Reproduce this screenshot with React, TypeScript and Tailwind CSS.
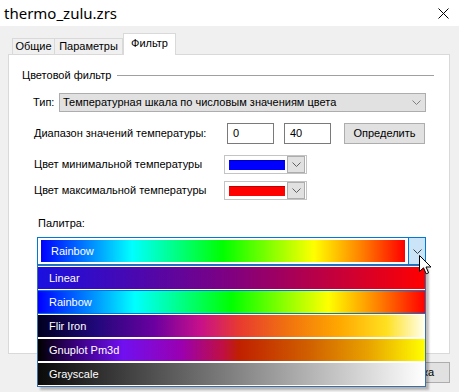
import React from 'react';

const palettes = [
  {
    name: 'Linear',
    bg: 'bg-[linear-gradient(to_right,#1a10e0_0%,#4a08b0_25%,#800080_50%,#c00040_75%,#ff0000_100%)]',
  },
  {
    name: 'Rainbow',
    bg: 'bg-[linear-gradient(to_right,#0000ff_0%,#00ffff_25%,#00ff00_50%,#ffff00_75%,#ff8000_88%,#ff0000_100%)]',
  },
  {
    name: 'Flir Iron',
    bg: 'bg-[linear-gradient(to_right,#000020_0%,#20087a_15%,#6a00a0_30%,#c8108a_42%,#e83a30_52%,#f07010_64%,#ffa800_78%,#ffe020_90%,#fffff0_100%)]',
  },
  {
    name: 'Gnuplot Pm3d',
    bg: 'bg-[linear-gradient(to_right,#000000_0%,#3a0080_10%,#7010f0_22%,#9a00b0_37%,#c01040_48%,#c02000_52%,#d06000_70%,#e8a000_85%,#ffff00_100%)]',
  },
  {
    name: 'Grayscale',
    bg: 'bg-[linear-gradient(to_right,#0a0a0a_0%,#808080_50%,#ffffff_100%)]',
  },
];

function Chevron({ color = '#606060' }: { color?: string }) {
  return (
    <svg width="9" height="5" viewBox="0 0 9 5" fill="none">
      <path d="M0.5 0.5 L4.5 4.5 L8.5 0.5" stroke={color} strokeWidth="1" />
    </svg>
  );
}

function ColorPicker({ color }: { color: string }) {
  return (
    <div className="ml-auto mr-[142px] flex h-[19px] w-[83px] shrink-0 items-center border border-[#c4c4c4] bg-white pl-[4px] pr-[1px]">
      <div className={`h-[10px] w-[56px] ${color}`} />
      <div className="ml-auto flex h-[17px] w-[18px] items-center justify-center border border-[#adadad] bg-[#e1e1e1]">
        <Chevron />
      </div>
    </div>
  );
}

export default function App() {
  return (
    <div className="relative h-[392px] w-[459px] overflow-hidden whitespace-nowrap bg-[#f0f0f0] font-['Liberation_Sans',Arial,sans-serif] text-[11px] text-black">
      {/* title bar */}
      <div className="flex h-[26px] items-center justify-between bg-white pl-[4px] pr-[10px]">
        <span className="font-['Noto_Sans',sans-serif] text-[15px] leading-none">thermo_zulu.zrs</span>
        <svg width="11" height="11" viewBox="0 0 11 11">
          <path d="M0.5 0.5 L10.5 10.5 M10.5 0.5 L0.5 10.5" stroke="#000" strokeWidth="1" />
        </svg>
      </div>

      {/* tabs */}
      <div className="pl-[8px] pr-[9px] pt-[7px]">
        <div className="relative z-10 flex h-[21px] items-end pl-[4px]">
          <div className="flex h-[16px] w-[43px] items-center justify-center border border-b-0 border-[#d9d9d9] bg-[#f0f0f0] leading-none">
            Общие
          </div>
          <div className="flex h-[16px] w-[68px] items-center justify-center border border-b-0 border-l-0 border-[#d9d9d9] bg-[#f0f0f0] leading-none">
            Параметры
          </div>
          <div className="mb-[-1px] flex h-[22px] w-[53px] items-center justify-center border border-b-0 border-[#d9d9d9] bg-white pb-[2px] leading-none">
            Фильтр
          </div>
        </div>

        {/* panel */}
        <div className="h-[300px] border border-[#d9d9d9] bg-white">
          <div className="mt-[12px] flex h-[16px] items-center pl-[13px] pr-[15px]">
            <span className="leading-none">Цветовой фильтр</span>
            <div className="ml-[6px] h-px flex-1 bg-[#a0a0a0]" />
          </div>

          <div className="mt-[10px] flex h-[19px] items-center pl-[24px]">
            <span className="w-[26px] leading-none">Тип:</span>
            <div className="ml-auto mr-[23px] flex h-[19px] w-[367px] shrink-0 items-center border border-[#adadad] bg-[#e1e1e1] pl-[3px] pr-[4px]">
              <span className="leading-none">Температурная шкала по числовым значениям цвета</span>
              <div className="ml-auto">
                <Chevron color="#808080" />
              </div>
            </div>
          </div>

          <div className="mt-[11px] flex h-[21px] items-center pl-[25px]">
            <span className="leading-none">Диапазон значений температуры:</span>
            <div className="ml-auto mr-[24px] flex shrink-0 items-center">
              <div className="flex h-[21px] w-[47px] items-center border border-[#7a7a7a] bg-white pl-[5px] leading-none">0</div>
              <div className="ml-[10px] flex h-[21px] w-[47px] items-center border border-[#7a7a7a] bg-white pl-[5px] leading-none">40</div>
              <div className="ml-[13px] flex h-[21px] w-[81px] items-center justify-center border border-[#adadad] bg-[#e1e1e1] leading-none">
                Определить
              </div>
            </div>
          </div>

          <div className="mt-[11px] flex h-[19px] items-center pl-[25px]">
            <span className="leading-none">Цвет минимальной температуры</span>
            <ColorPicker color="bg-[#0000ff] border-t border-[#0000c0]" />
          </div>

          <div className="mt-[7px] flex h-[19px] items-center pl-[25px]">
            <span className="leading-none">Цвет максимальной температуры</span>
            <ColorPicker color="bg-[#ff0000] border-t border-[#c00000]" />
          </div>

          <div className="mt-[15px] flex h-[16px] items-center pl-[29px]">
            <span className="leading-none">Палитра:</span>
          </div>

          <div className="ml-[28px] mt-[6px] flex h-[29px] w-[389px] border border-b-2 border-[#0078d7] bg-white">
            <div className="flex flex-1 items-center pb-[2px] pl-[3px] pr-[3px] pt-[2px]">
              <div className={`flex h-[22px] w-full items-center pl-[10px] text-white ${palettes[1].bg}`}>
                <span className="leading-none">Rainbow</span>
              </div>
            </div>
            <div className="flex w-[17px] items-center justify-center border-l border-[#0078d7] bg-[#cce4f7]">
              <Chevron color="#404040" />
            </div>
          </div>
        </div>
      </div>

      {/* dialog buttons */}
      <div className="mt-[8px] flex justify-end gap-[6px] pr-[9px]">
        <div className="flex h-[21px] w-[75px] items-center justify-center border border-[#adadad] bg-[#e1e1e1]">ОК</div>
        <div className="flex h-[21px] w-[75px] items-center justify-center border border-[#adadad] bg-[#e1e1e1]">Отмена</div>
        <div className="flex h-[21px] w-[75px] items-center justify-center border border-[#adadad] bg-[#e1e1e1]">Справка</div>
      </div>

      {/* open dropdown list */}
      <div className="absolute left-[37px] top-[265px] w-[389px] border border-[#3a6ea5] bg-white shadow-[3px_3px_2px_rgba(0,0,0,0.25)]">
        {palettes.map((p) => (
          <div key={p.name} className={`py-[1px] ${p.name === 'Rainbow' ? 'bg-[#0078d7]' : 'bg-white'}`}>
            <div className={`flex h-[22px] items-center pl-[11px] text-white ${p.bg}`}>
              <span className="leading-none">{p.name}</span>
            </div>
          </div>
        ))}
      </div>

      {/* mouse cursor */}
      <svg className="absolute left-[419px] top-[255px]" width="13" height="20" viewBox="0 0 13 20">
        <path d="M0.5 0.5 L0.5 16.5 L4.5 12.8 L7.2 18.8 L9.6 17.8 L7 12 L12 12 Z" fill="#fff" stroke="#000" strokeWidth="1" strokeLinejoin="round" />
      </svg>
    </div>
  );
}
